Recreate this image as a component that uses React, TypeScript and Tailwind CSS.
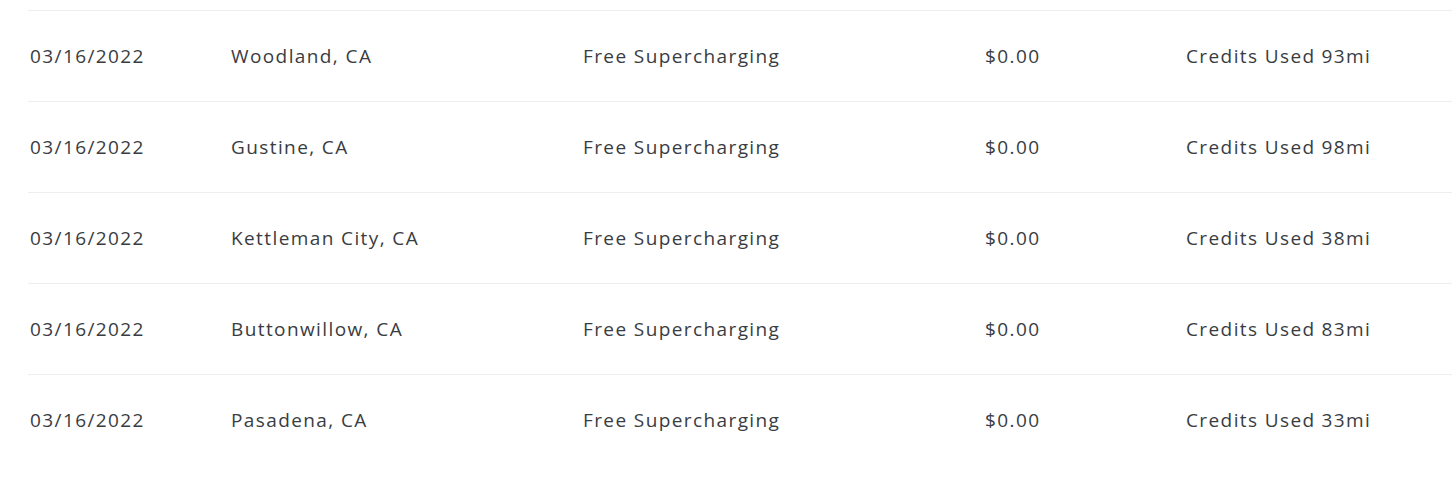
const rows = [
  { loc: "Woodland, CA", mi: "93mi" },
  { loc: "Gustine, CA", mi: "98mi" },
  { loc: "Kettleman City, CA", mi: "38mi" },
  { loc: "Buttonwillow, CA", mi: "83mi" },
  { loc: "Pasadena, CA", mi: "33mi" },
];

export default function App() {
  return (
    <div className="w-[1452px] h-[486px] overflow-hidden bg-white pt-[10px] pl-[28px]" style={{ fontFamily: '"Open Sans", "Liberation Sans", sans-serif' }}>
      <div className="w-[1500px]">
        {rows.map((r, i) => (
          <div key={i} className="flex items-center h-[91px] border-t border-[#eeeeee] text-[19px] text-[#393c41] tracking-[1.4px]">
            <div className="w-[201px] pl-[2px]">03/16/2022</div>
            <div className="w-[352px] pl-[2px]">{r.loc}</div>
            <div className="w-[402px] pl-[2px]">Free Supercharging</div>
            <div className="w-[201px] pl-[2px]">$0.00</div>
            <div className="flex gap-[6px] pl-[2px]">
              <span>Credits Used</span>
              <span>{r.mi}</span>
            </div>
          </div>
        ))}
      </div>
    </div>
  );
}
